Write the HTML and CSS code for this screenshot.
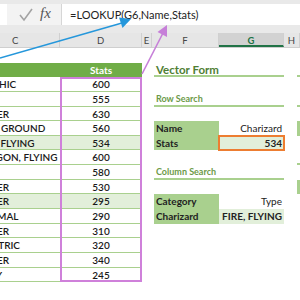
FILE: index.html
```html
<!DOCTYPE html>
<html lang="en">
<head>
  <meta charset="UTF-8">
  <meta name="viewport" content="width=device-width, initial-scale=1.0">
  <title>LOOKUP: Vector Form</title>
  <link rel="stylesheet" href="styles.css">
</head>
<body>
  <!-- formula bar -->
  <div class="formula-bar">
    <div class="name-box"></div>
    <div class="bar-icons">
      <svg class="check" width="14" height="14" viewBox="0 0 14 14">
        <polyline points="1,7 5,12 13,1" fill="none" stroke="#a3a3a3" stroke-width="1.6"/>
      </svg>
      <span class="fx">fx</span>
    </div>
    <div class="formula">=LOOKUP(G6,Name,Stats)</div>
  </div>

  <!-- column letters -->
  <div class="col-heads">
    <div class="col col-c">C</div>
    <div class="col col-d">D</div>
    <div class="col col-e">E</div>
    <div class="col col-f">F</div>
    <div class="col col-g active">G</div>
    <div class="col col-h">H</div>
  </div>

  <div class="sheet">
    <!-- pokemon table, cut off on the left -->
    <div class="pokedex">
      <div class="head-row">
        <span class="type-head"></span>
        <span class="stat-head">Stats</span>
      </div>
      <div class="data">
        <div class="types">
          <div class="cell">PSYCHIC</div>
          <div class="cell">FIRE</div>
          <div class="cell">WATER</div>
          <div class="cell">BUG, GROUND</div>
          <div class="cell hl">FIRE, FLYING</div>
          <div class="cell">DRAGON, FLYING</div>
          <div class="cell">FIRE</div>
          <div class="cell">WATER</div>
          <div class="cell hl">WATER</div>
          <div class="cell">NORMAL</div>
          <div class="cell">WATER</div>
          <div class="cell">ELECTRIC</div>
          <div class="cell">WATER</div>
          <div class="cell">FAIRY</div>
        </div>
        <div class="stats">
          <div class="cell">600</div>
          <div class="cell">555</div>
          <div class="cell">630</div>
          <div class="cell">560</div>
          <div class="cell hl">534</div>
          <div class="cell">600</div>
          <div class="cell">580</div>
          <div class="cell">530</div>
          <div class="cell hl">295</div>
          <div class="cell">290</div>
          <div class="cell">310</div>
          <div class="cell">320</div>
          <div class="cell">340</div>
          <div class="cell">245</div>
        </div>
      </div>
    </div>

    <!-- lookup examples -->
    <div class="panel">
      <h1>Vector Form</h1>
      <h2>Row Search</h2>
      <div class="lookup">
        <div class="label">Name</div><div class="value">Charizard</div>
        <div class="label">Stats</div><div class="value result">534</div>
      </div>
      <h2>Column Search</h2>
      <div class="lookup">
        <div class="label">Category</div><div class="value">Type</div>
        <div class="label">Charizard</div><div class="value found">FIRE, FLYING</div>
      </div>
    </div>

    <!-- next panel, only its edge shows -->
    <div class="panel next">
      <h1></h1>
      <h2></h2>
      <div class="lookup"><div class="label"></div><div class="label"></div></div>
      <h2></h2>
      <div class="lookup"><div class="label"></div><div class="label"></div></div>
    </div>
  </div>

  <!-- callout arrows drawn over the sheet -->
  <svg class="arrows" width="300" height="300" viewBox="0 0 300 300">
    <line x1="0" y1="58" x2="122" y2="23" stroke="#2597db" stroke-width="1.6"/>
    <polygon points="131,19 122.5,28 119,17.5" fill="#2597db"/>
    <line x1="142" y1="74" x2="163" y2="33" stroke="#c67fd8" stroke-width="1.6"/>
    <polygon points="167,25 167,37 157.5,32" fill="#c67fd8"/>
  </svg>
</body>
</html>
```

FILE: styles.css
```css
body {
  margin: 0;
  width: 300px;
  height: 300px;
  overflow: hidden;
  position: relative;
  background: #fff;
  font-family: 'Lato', 'Liberation Sans', sans-serif;
  color: #222;
}

/* formula bar */
.formula-bar {
  display: flex;
  height: 21px;
  padding: 4px 0 8px;
  background: #e9e9e9;
}

.name-box {
  width: 7px;
  background: #fff;
}

.bar-icons {
  width: 54px;
  display: flex;
  align-items: center;
  gap: 7px;
  padding-left: 12px;
  box-sizing: border-box;
  background: #f3f3f3;
}

.fx {
  font-family: 'Liberation Serif', serif;
  font-style: italic;
  font-size: 15px;
  color: #555;
  margin-top: -2px;
}

.formula {
  flex: 1;
  background: #fff;
  border-left: 1px solid #d6d6d6;
  font-size: 11px;
  line-height: 21px;
  padding-left: 8px;
}

/* column letters */
.col-heads {
  display: flex;
  height: 15px;
  background: #e6e6e6;
  border-bottom: 1px solid #cfcfcf;
  box-sizing: border-box;
}

.col {
  box-sizing: border-box;
  border-right: 1px solid #d0d0d0;
  text-align: center;
  font-size: 9.5px;
  line-height: 15px;
  color: #444;
}

.col-c { width: 60px; text-align: left; text-indent: 12px; }
.col-d { width: 82px; }
.col-e { width: 10px; }
.col-f { width: 67px; }
.col-g { width: 65px; }
.col-h { width: 16px; }

.col.active {
  background: #d2d2d2;
  color: #217346;
  border-bottom: 2px solid #217346;
  font-weight: bold;
}

/* sheet body */
.sheet {
  display: flex;
  align-items: flex-start;
  padding-top: 14.65px;
  font-size: 10px;
}

.pokedex {
  width: 142px;
  flex-shrink: 0;
}

.head-row {
  display: flex;
  height: 14.65px;
  background: #70ad47;
  color: #fff;
  font-weight: bold;
  line-height: 14.65px;
}

.type-head { width: 60px; }
.stat-head { width: 82px; text-align: center; }

.data {
  display: flex;
  font-weight: 600;
  color: #1a1a1a;
}

.cell {
  height: 14.65px;
  box-sizing: border-box;
  border-bottom: 1px solid #a9d08e;
  line-height: 14px;
  white-space: nowrap;
}

.cell.hl { background: #e2efda; }

.types {
  width: 60px;
  overflow: hidden;
}

.types .cell {
  text-indent: -25px;
}

.stats {
  width: 82px;
  text-align: center;
  outline: 2px solid #cf80da;
  outline-offset: -2px;
}

/* lookup panels */
.panel {
  width: 130px;
  margin-left: 12px;
  flex-shrink: 0;
}

.panel h1,
.panel h2 {
  margin: 0;
  height: 14.65px;
  box-sizing: border-box;
  border-bottom: 2px solid #a9d08e;
  padding-left: 2px;
  font-weight: bold;
}

.panel h1 {
  font-size: 11.5px;
  line-height: 13px;
  color: #4f7e34;
}

.panel h2 {
  margin-top: 14.65px;
  font-size: 9px;
  line-height: 14px;
  color: #6c9a48;
}

.lookup {
  display: grid;
  grid-template-columns: 65px 65px;
  grid-auto-rows: 14.65px;
  margin-top: 14.65px;
  line-height: 14.65px;
}

.lookup .label {
  background: #a9d08e;
  font-weight: bold;
  padding-left: 2px;
}

.lookup .value {
  text-align: right;
  padding-right: 2px;
}

.lookup .found {
  background: #e2efda;
  font-weight: bold;
}

.lookup .result {
  background: #e2efda;
  font-weight: bold;
  outline: 2px solid #ed7d31;
  outline-offset: -1px;
}

.panel.next {
  margin-left: 13px;
}

/* arrows */
.arrows {
  position: absolute;
  top: 0;
  left: 0;
  pointer-events: none;
}
```
